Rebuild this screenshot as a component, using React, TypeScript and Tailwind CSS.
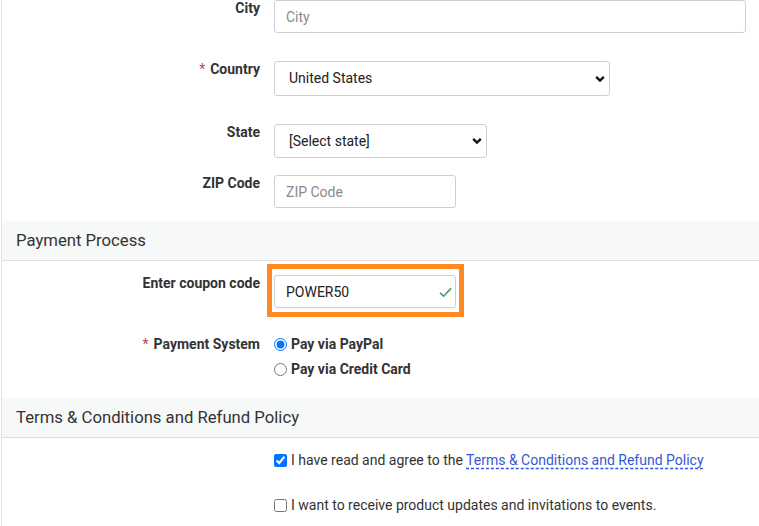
import React, { useState } from "react";

const Label = ({ children, required }: { children: React.ReactNode; required?: boolean }) => (
    <div className="w-[258px] shrink-0 text-right text-[14px] leading-4 font-bold text-[#333]">
        {required && <span className="text-[#b94a48] font-normal mr-[5px]">*</span>}
        {children}
    </div>
)

const Chevron = () => (
    <svg className="pointer-events-none absolute right-[5px] top-1/2 -translate-y-1/2" width="10" height="7" viewBox="0 0 10 7">
        <path d="M1.2 1.3 L5 5 L8.8 1.3" fill="none" stroke="#111" strokeWidth="2.4" />
    </svg>
)

const SectionHeader = ({ title }: { title: string }) => (
    <div className="h-[40px] bg-[#f7f8f8] border-b border-[#dcdcdc] flex items-center pl-[14px] text-[16.7px] text-[#333]">
        {title}
    </div>
)

const inputClass =
    "h-[33px] rounded-[3px] border border-[#ccd0d5] bg-white pl-[11px] text-[14px] text-[#222] placeholder:text-[#8a8a8a] outline-none"

export default function App() {
    const [country, setCountry] = useState("US")
    const [state, setState] = useState("")
    const [coupon, setCoupon] = useState("POWER50")
    const [payment, setPayment] = useState("paypal")
    const [agree, setAgree] = useState(true)
    const [updates, setUpdates] = useState(false)

    return (
        <div className="min-h-[526px] bg-white font-['Roboto','Liberation_Sans',sans-serif]">
            <div className="ml-px border-l border-[#e2e2e2] min-h-[526px] flex flex-col">
                <div className="flex gap-[14px]">
                    <Label>City</Label>
                    <input className={`${inputClass} w-[472px]`} placeholder="City" />
                </div>

                <div className="flex gap-[14px] mt-[28px]">
                    <Label required>Country</Label>
                    <div className="relative">
                        <select
                            value={country}
                            onChange={(e) => setCountry(e.target.value)}
                            className="appearance-none h-[35px] w-[336px] rounded-[3px] border border-[#ccd0d5] bg-white pl-[14px] text-[14px] text-[#222] outline-none"
                        >
                            <option value="US">United States</option>
                            <option value="CA">Canada</option>
                        </select>
                        <Chevron />
                    </div>
                </div>

                <div className="flex gap-[14px] mt-[28px]">
                    <Label>State</Label>
                    <div className="relative">
                        <select
                            value={state}
                            onChange={(e) => setState(e.target.value)}
                            className="appearance-none h-[34px] w-[213px] rounded-[3px] border border-[#ccd0d5] bg-white pl-[14px] text-[14px] text-[#222] outline-none"
                        >
                            <option value="">[Select state]</option>
                            <option value="CA">California</option>
                        </select>
                        <Chevron />
                    </div>
                </div>

                <div className="flex gap-[14px] mt-[17px]">
                    <Label>ZIP Code</Label>
                    <input className={`${inputClass} w-[182px]`} placeholder="ZIP Code" />
                </div>

                <div className="mt-[13px]">
                    <SectionHeader title="Payment Process" />
                </div>

                <div className="flex gap-[14px] mt-[14px]">
                    <Label>Enter coupon code</Label>
                    <div className="relative">
                        <input
                            value={coupon}
                            onChange={(e) => setCoupon(e.target.value)}
                            className={`${inputClass} w-[182px] text-[#111]`}
                        />
                        <svg className="absolute right-[4px] top-[12px]" width="13" height="11" viewBox="0 0 13 11">
                            <path d="M1 5.8 L4.6 9.2 L12 1.4" fill="none" stroke="#4a9a64" strokeWidth="1.6" />
                        </svg>
                        <div className="pointer-events-none absolute -left-[7px] -top-[11px] -right-[8px] -bottom-[9px] border-[5px] border-[#ff8a24]" />
                    </div>
                </div>

                <div className="flex gap-[14px] mt-[28px]">
                    <Label required>Payment System</Label>
                    <div className="flex flex-col gap-[9px] text-[14px] leading-4 font-bold text-[#333]">
                        <label className="flex items-center gap-[4px]">
                            <input
                                type="radio"
                                name="payment"
                                checked={payment === "paypal"}
                                onChange={() => setPayment("paypal")}
                                className="m-0 w-[13px] h-[13px] accent-[#0075ff]"
                            />
                            Pay via PayPal
                        </label>
                        <label className="flex items-center gap-[4px]">
                            <input
                                type="radio"
                                name="payment"
                                checked={payment === "card"}
                                onChange={() => setPayment("card")}
                                className="m-0 w-[13px] h-[13px] accent-[#0075ff]"
                            />
                            Pay via Credit Card
                        </label>
                    </div>
                </div>

                <div className="mt-[21px]">
                    <SectionHeader title="Terms & Conditions and Refund Policy" />
                </div>

                <div className="pl-[272px] text-[14px] leading-4 text-[#333]">
                    <label className="flex items-center gap-[4px] mt-[14px]">
                        <input
                            type="checkbox"
                            checked={agree}
                            onChange={(e) => setAgree(e.target.checked)}
                            className="m-0 w-[13px] h-[13px] accent-[#0075ff]"
                        />
                        <span>
                            I have read and agree to the{" "}
                            <a href="#" className="text-[#3359d6] underline decoration-dashed underline-offset-[3px]">
                                Terms &amp; Conditions and Refund Policy
                            </a>
                        </span>
                    </label>
                    <label className="flex items-center gap-[4px] mt-[29px]">
                        <input
                            type="checkbox"
                            checked={updates}
                            onChange={(e) => setUpdates(e.target.checked)}
                            className="m-0 w-[13px] h-[13px] accent-[#0075ff]"
                        />
                        I want to receive product updates and invitations to events.
                    </label>
                </div>
            </div>
        </div>
    )
}
